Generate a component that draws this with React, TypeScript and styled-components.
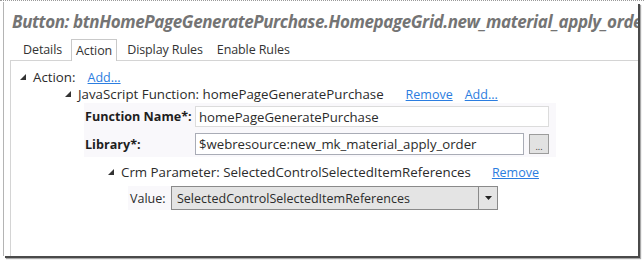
import React from "react";
import styled, { createGlobalStyle } from "styled-components";

const Global = createGlobalStyle`
  html, body { margin: 0; padding: 0; background: #ffffff; }
  body { width: 644px; height: 260px; overflow: hidden; }
`;

const FONT = `"Open Sans", "Noto Sans", sans-serif`;

const Page = styled.div`
  width: 644px;
  height: 260px;
  box-sizing: border-box;
  border-top: 1px dotted #9a9a9a;
  padding: 1px 0 0 3px;
  font-family: ${FONT};
  color: #2b2b2b;
`;

const Frame = styled.div`
  width: 635px;
  height: 254px;
  box-sizing: border-box;
  border-left: 1px solid #b4b4b4;
  background: #fff;
  box-shadow: 2px 2px 0 #4a4a4a, 3px 3px 1px #a8a8a8;
  display: flex;
  flex-direction: column;
  overflow: hidden;
`;

const Title = styled.div`
  height: 34px;
  padding: 8px 0 0 8px;
  box-sizing: border-box;
  font-weight: 700;
  font-style: italic;
  font-size: 17px;
  letter-spacing: -0.4px;
  color: #747474;
  white-space: nowrap;
  overflow: hidden;
`;

const TabStrip = styled.div`
  display: flex;
  align-items: flex-end;
  height: 24px;
  padding-left: 12px;
  font-size: 12.5px;
  letter-spacing: -0.1px;
`;

const Tab = styled.div<{ $active?: boolean }>`
  height: 22px;
  box-sizing: border-box;
  padding: 0 ${(p) => (p.$active ? "4px" : "6px")};
  margin: ${(p) => (p.$active ? "0 3px 0 2px" : "0")};
  display: flex;
  align-items: center;
  border: 1px solid ${(p) => (p.$active ? "#c9c9c9" : "transparent")};
  border-bottom: none;
  background: #fff;
  position: relative;
  top: ${(p) => (p.$active ? "1px" : "0")};
  color: #333;
`;

const Panel = styled.div`
  flex: 1;
  margin-left: 6px;
  border-top: 1px solid #d4d4d4;
  border-left: 1px solid #d4d4d4;
  padding-top: 7px;
  font-size: 12.5px;
`;

const TreeRow = styled.div<{ $indent: number; $top?: number }>`
  display: flex;
  align-items: center;
  height: 18px;
  padding-left: ${(p) => p.$indent}px;
  margin-top: ${(p) => p.$top ?? 0}px;
  white-space: nowrap;
`;

const NodeText = styled.span`
  font-size: 13.3px;
`;

const Toggle = styled.svg`
  width: 6px;
  height: 6px;
  margin-right: 7px;
  flex: none;
`;

const Link = styled.a<{ $gap: number }>`
  color: #2b7de0;
  text-decoration: underline;
  margin-left: ${(p) => p.$gap}px;
  cursor: pointer;
`;

const Fields = styled.div`
  margin-left: 73px;
  width: 472px;
  background: #f9f8fb;
  padding: 3px 0 2px 0;
`;

const FieldRow = styled.div<{ $top?: number }>`
  display: flex;
  align-items: center;
  margin-top: ${(p) => p.$top ?? 0}px;
`;

const Label = styled.div`
  width: 111px;
  flex: none;
  box-sizing: border-box;
  padding-left: 1px;
  font-weight: 700;
  font-size: 12.6px;
  white-space: nowrap;
  color: #1e1e1e;
`;

const TextBox = styled.div<{ $w: number; $h: number; $strong?: boolean }>`
  width: ${(p) => p.$w}px;
  height: ${(p) => p.$h}px;
  flex: none;
  box-sizing: border-box;
  border: 1px solid ${(p) => (p.$strong ? "#a9acb6" : "#dcdcdc")};
  background: #fff;
  padding-left: 3px;
  display: flex;
  align-items: center;
  white-space: nowrap;
  overflow: hidden;
  font-size: 13.2px;
`;

const BrowseButton = styled.div`
  width: 20px;
  height: 20px;
  flex: none;
  box-sizing: border-box;
  margin-left: 5px;
  border: 1px solid #9c9c9c;
  background: #e2e2e2;
  display: flex;
  align-items: flex-end;
  justify-content: center;
  font-size: 9px;
  line-height: 12px;
  color: #333;
`;

const ValueRow = styled.div`
  display: flex;
  align-items: center;
  margin: 5px 0 0 117px;
  width: 370px;
  background: #f9f8fb;
`;

const ValueLabel = styled.div`
  width: 41px;
  padding-left: 2px;
`;

const Select = styled.div`
  width: 327px;
  height: 24px;
  box-sizing: border-box;
  border: 1px solid #8a8a8a;
  background: #e4e4e4;
  display: flex;
  align-items: stretch;
`;

const SelectText = styled.div`
  flex: 1;
  display: flex;
  align-items: center;
  padding-left: 5px;
  white-space: nowrap;
`;

const SelectArrow = styled.div`
  width: 18px;
  border-left: 1px solid #8a8a8a;
  display: flex;
  align-items: center;
  justify-content: center;
`;

const Tri = () => (
  <Toggle viewBox="0 0 6 6">
    <polygon points="6,0 6,6 0,6" fill="#333" />
  </Toggle>
);

export default function App() {
  return (
    <>
      <Global />
      <Page>
        <Frame>
          <Title>Button: btnHomePageGeneratePurchase.HomepageGrid.new_material_apply_order</Title>
          <TabStrip>
            <Tab>Details</Tab>
            <Tab $active>Action</Tab>
            <Tab>Display Rules</Tab>
            <Tab>Enable Rules</Tab>
          </TabStrip>
          <Panel>
            <TreeRow $indent={9}>
              <Tri />
              <NodeText>Action:</NodeText>
              <Link $gap={12}>Add...</Link>
            </TreeRow>
            <TreeRow $indent={54} $top={-1}>
              <Tri />
              <NodeText>JavaScript Function: homePageGeneratePurchase</NodeText>
              <Link $gap={22}>Remove</Link>
              <Link $gap={12}>Add...</Link>
            </TreeRow>
            <Fields>
              <FieldRow>
                <Label>Function Name*:</Label>
                <TextBox $w={354} $h={21}>homePageGeneratePurchase</TextBox>
              </FieldRow>
              <FieldRow $top={6}>
                <Label>Library*:</Label>
                <TextBox $w={329} $h={22} $strong>$webresource:new_mk_material_apply_order</TextBox>
                <BrowseButton>...</BrowseButton>
              </FieldRow>
            </Fields>
            <TreeRow $indent={97} $top={6}>
              <Tri />
              <NodeText>Crm Parameter: SelectedControlSelectedItemReferences</NodeText>
              <Link $gap={21}>Remove</Link>
            </TreeRow>
            <ValueRow>
              <ValueLabel>Value:</ValueLabel>
              <Select>
                <SelectText>SelectedControlSelectedItemReferences</SelectText>
                <SelectArrow>
                  <svg width="7" height="4" viewBox="0 0 7 4">
                    <polygon points="0,0 7,0 3.5,4" fill="#222" />
                  </svg>
                </SelectArrow>
              </Select>
            </ValueRow>
          </Panel>
        </Frame>
      </Page>
    </>
  );
}
